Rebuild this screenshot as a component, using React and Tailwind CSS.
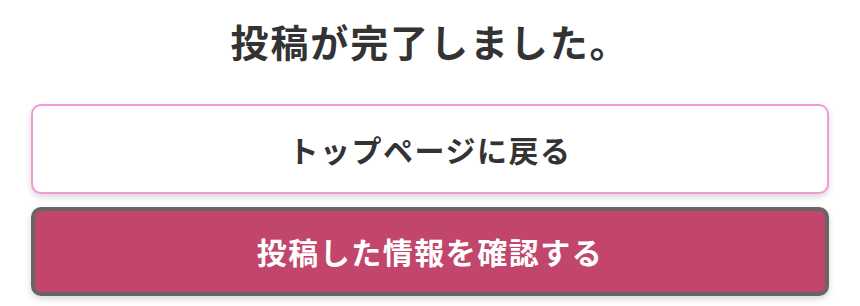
export default function App() {
  const font = { fontFamily: '"Noto Sans CJK JP", "Noto Sans", sans-serif' };
  return (
    <div className="w-[860px] h-[306px] bg-white flex flex-col" style={font}>
      <div className="h-[82px] flex items-center justify-center">
        <h1 className="text-[38px] leading-none font-bold text-[#333333] tracking-[0.05em]">投稿が完了しました。</h1>
      </div>
      <div className="mt-[22px] px-[31px] flex flex-col gap-[13px]">
        <button className="h-[90px] w-full rounded-[10px] border-2 border-[#f19ad7] bg-white shadow-[0_3px_6px_rgba(0,0,0,0.16)] flex items-center justify-center text-[30px] font-bold text-[#333333] tracking-[0.05em]">
          トップページに戻る
        </button>
        <button className="h-[89px] w-full rounded-[10px] border-4 border-[#666666] bg-[#c2466b] shadow-[0_3px_6px_rgba(0,0,0,0.16)] flex items-center justify-center text-[30px] font-bold text-white tracking-[0.05em]">
          投稿した情報を確認する
        </button>
      </div>
    </div>
  );
}
